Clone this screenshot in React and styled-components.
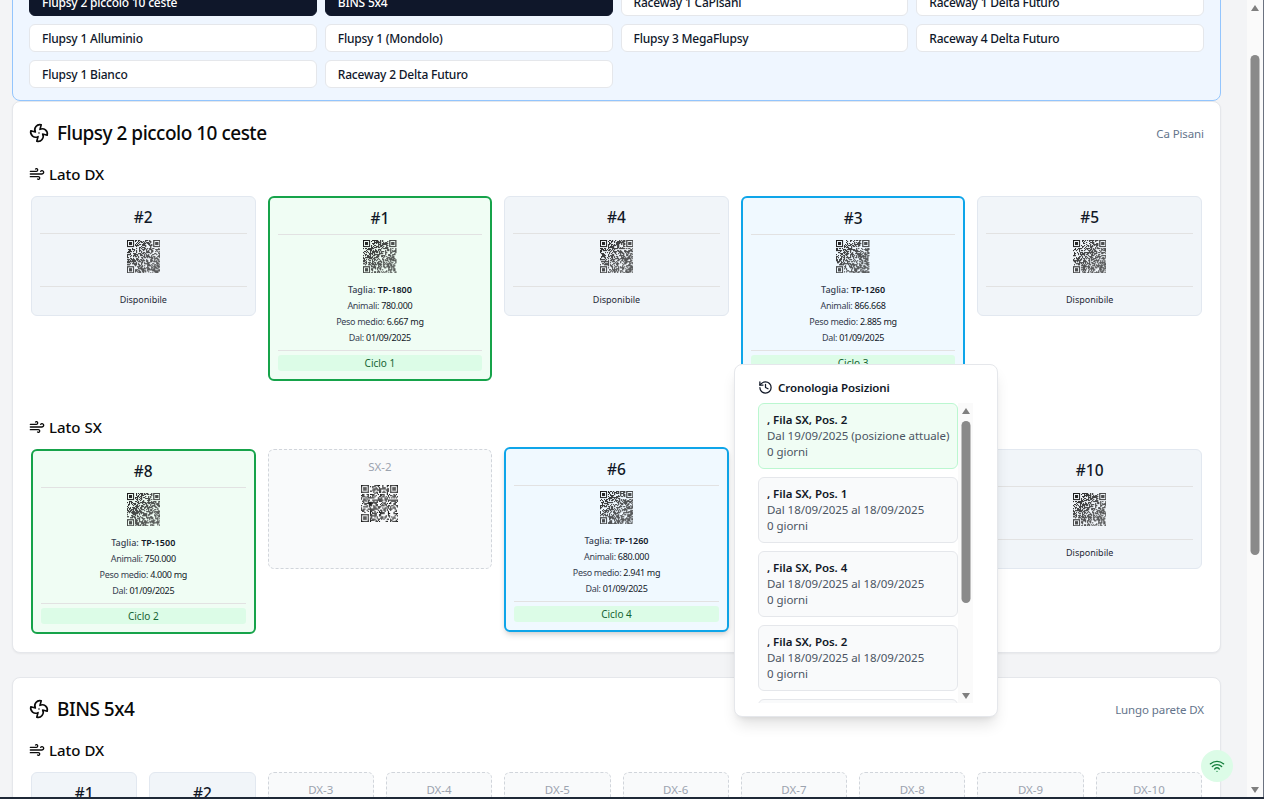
import React from "react";
import styled, { createGlobalStyle } from "styled-components";
import { Fan, Wind, History, Wifi } from "lucide-react";

const GlobalStyle = createGlobalStyle`
  html, body {
    margin: 0;
    padding: 0;
    height: 100%;
    overflow: hidden;
    background: #f3f4f6;
  }
  * { box-sizing: border-box; }
  body {
    font-family: "Noto Sans", "Open Sans", Arial, sans-serif;
    color: #0f172a;
  }
`;

const Viewport = styled.div`
  position: relative;
  width: 1264px;
  height: 799px;
  overflow: hidden;
  background: #f3f4f6;
`;

const Page = styled.main`
  width: 1247px;
  margin-top: -29px;
  padding: 0 26px 0 12px;
  display: flex;
  flex-direction: column;
`;

const SelectorPanel = styled.section`
  background: #eff6ff;
  border: 1px solid #93c5fd;
  border-radius: 8px;
  padding: 16px 16px 12px;
  display: grid;
  grid-template-columns: repeat(4, 1fr);
  gap: 8px;
`;

const SelectorButton = styled.button`
  height: 28px;
  padding: 0 12px;
  border-radius: 6px;
  text-align: left;
  font: 500 12px "Noto Sans", sans-serif;
  letter-spacing: -0.2px;
  border: 1px solid ${(p) => (p.$active ? "#0f172a" : "#e5e7eb")};
  background: ${(p) => (p.$active ? "#0f172a" : "#ffffff")};
  color: ${(p) => (p.$active ? "#ffffff" : "#0f172a")};
`;

const Card = styled.section`
  margin-top: ${(p) => p.$gap}px;
  background: #ffffff;
  border: 1px solid #e5e7eb;
  border-radius: 8px;
  box-shadow: 0 1px 2px rgba(0, 0, 0, 0.05);
  padding: 16px;
`;

const CardHeader = styled.header`
  display: flex;
  align-items: center;
  justify-content: space-between;
  height: 30px;
`;

const CardTitle = styled.h2`
  margin: 0;
  display: flex;
  align-items: center;
  gap: 8px;
  font-size: 19px;
  font-weight: 500;
  letter-spacing: -0.5px;
  line-height: 30px;
  color: #0a0a0a;
`;

const Location = styled.span`
  font-size: 11.5px;
  letter-spacing: -0.1px;
  color: #64748b;
`;

const SideTitle = styled.h3`
  margin: 14px 0 10px;
  display: flex;
  align-items: center;
  gap: 4px;
  height: 24px;
  font-size: 15px;
  font-weight: 500;
  color: #0a0a0a;
`;

const Grid = styled.div`
  display: grid;
  grid-template-columns: repeat(${(p) => p.$cols}, 1fr);
  gap: 12px;
  padding: 0 2px;
  align-items: start;
  margin-bottom: ${(p) => p.$bottom || 0}px;
`;

const palettes = {
  free: { border: "1px solid #e2e8f0", bg: "#f1f5f9" },
  busy: { border: "2px solid #16a34a", bg: "#f0fdf4" },
  blue: { border: "2px solid #0ea5e9", bg: "#f0f9ff" },
  empty: { border: "1px dashed #d1d5db", bg: "#f9fafb" },
};

const Basket = styled.div`
  border: ${(p) => palettes[p.$kind].border};
  background: ${(p) => palettes[p.$kind].bg};
  border-radius: 6px;
  padding: 8px;
  display: flex;
  flex-direction: column;
  align-items: center;
  transform: ${(p) => (p.$lifted ? "translateY(-2px)" : "none")};
  box-shadow: ${(p) => (p.$lifted ? "0 4px 6px -1px rgba(0,0,0,.15), 0 2px 4px -2px rgba(0,0,0,.1)" : "none")};
  height: ${(p) => p.$height}px;
  overflow: hidden;
`;

const BasketNumber = styled.div`
  width: 100%;
  text-align: center;
  font-size: 15.5px;
  font-weight: 500;
  line-height: 20px;
  padding: 2px 0 6px;
  border-bottom: 1px solid #e2e2e2;
  color: #111827;
`;

const EmptyLabel = styled.div`
  font-size: 11.5px;
  line-height: 16px;
  color: #9ca3af;
  margin: 1px 0 10px;
`;

const QrWrap = styled.div`
  padding: ${(p) => (p.$busy ? "5px 0 10px" : "6px 0 13px")};
  display: flex;
  justify-content: center;
  line-height: 0;
`;

const FreeLabel = styled.div`
  width: 100%;
  text-align: center;
  border-top: 1px solid #e2e2e2;
  padding-top: 6px;
  font-size: 9px;
  line-height: 14px;
  color: #1f2937;
`;

const Info = styled.div`
  text-align: center;
  font-size: 9px;
  letter-spacing: -0.3px;
  line-height: 16px;
  color: #374151;
  margin-top: -1px;
  b { font-weight: 400; color: #111827; }
`;

const SizeLine = styled.div`
  font-weight: 500;
  letter-spacing: 0;
  b { font-weight: 600; }
`;

const Cycle = styled.div`
  width: 100%;
  margin-top: 4px;
  border-top: 1px solid #e2e2e2;
  padding-top: 4px;
`;

const CycleTag = styled.div`
  height: 16px;
  border-radius: 3px;
  background: #dcfce7;
  color: #166534;
  font-size: 10px;
  line-height: 16px;
  text-align: center;
`;

const Popup = styled.aside`
  position: absolute;
  left: 734px;
  top: 364px;
  width: 264px;
  height: 353px;
  background: #ffffff;
  border: 1px solid #e5e7eb;
  border-radius: 8px;
  box-shadow: 0 10px 15px -3px rgba(0,0,0,.12), 0 4px 6px -4px rgba(0,0,0,.1);
  padding: 14px 24px 13px 23px;
  display: flex;
  flex-direction: column;
`;

const PopupTitle = styled.div`
  display: flex;
  align-items: center;
  gap: 5px;
  height: 16px;
  font-size: 11.5px;
  font-weight: 600;
  letter-spacing: -0.1px;
  color: #111827;
  margin-bottom: 8px;
`;

const PopupBody = styled.div`
  flex: 1;
  min-height: 0;
  display: flex;
`;

const EntryList = styled.div`
  width: 200px;
  overflow: hidden;
  display: flex;
  flex-direction: column;
  gap: 8px;
`;

const Entry = styled.div`
  flex: none;
  height: 66px;
  padding: 8px;
  border-radius: 6px;
  border: 1px solid ${(p) => (p.$current ? "#bbf7d0" : "#e5e7eb")};
  background: ${(p) => (p.$current ? "#f0fdf4" : "#f9fafb")};
  font-size: 11.5px;
  letter-spacing: -0.05px;
  line-height: 16px;
  color: #4b5563;
  white-space: nowrap;
  strong { display: block; font-weight: 600; color: #111827; }
`;

const ScrollBar = styled.div`
  flex: none;
  width: ${(p) => p.$width}px;
  background: #fafafa;
  display: flex;
  flex-direction: column;
  align-items: center;
  justify-content: space-between;
`;

const PageBar = styled(ScrollBar)`
  position: absolute;
  top: 0;
  right: 1px;
  bottom: 2px;
`;

const Thumb = styled.div`
  position: absolute;
  left: 50%;
  transform: translateX(-50%);
  top: ${(p) => p.$top}px;
  height: ${(p) => p.$height}px;
  width: 9px;
  border-radius: 5px;
  background: #8a8a8a;
`;

const Track = styled.div`
  position: relative;
  height: 100%;
  display: flex;
  flex-direction: column;
  justify-content: space-between;
  align-items: center;
  padding: 5px 0 4px;
  width: 100%;
`;

const Arrow = styled.div`
  width: 0;
  height: 0;
  border-left: 4.5px solid transparent;
  border-right: 4.5px solid transparent;
  ${(p) => (p.$down ? "border-top: 6px solid #7f7f7f;" : "border-bottom: 6px solid #7f7f7f;")}
`;

const WindowEdgeRight = styled.div`
  position: absolute;
  top: 0;
  right: 0;
  width: 1px;
  height: 100%;
  background: #6b7280;
`;

const WindowEdgeBottom = styled.div`
  position: absolute;
  left: 0;
  bottom: 0;
  width: 100%;
  height: 2px;
  background: #1f2937;
`;

const StatusBubble = styled.div`
  position: absolute;
  left: 1201px;
  top: 750px;
  width: 32px;
  height: 32px;
  border-radius: 50%;
  background: #dcfce7;
  color: #15803d;
  display: flex;
  align-items: center;
  justify-content: center;
`;

// fake qr code, only the look matters
const Qr = ({ seed, size = 33.4 }) => {
  const n = 33;
  const cells = [];
  const finder = (x, y) =>
    x < 7 && y < 7 ? [x, y] : x >= n - 7 && y < 7 ? [x - n + 7, y] : x < 7 && y >= n - 7 ? [x, y - n + 7] : null;
  let s = seed * 7919 + 13;
  for (let y = 0; y < n; y++) {
    for (let x = 0; x < n; x++) {
      s = (s * 1103515245 + 12345) & 0x7fffffff;
      const f = finder(x, y);
      let on;
      if (f) {
        const [a, b] = f;
        on = a === 0 || a === 6 || b === 0 || b === 6 || (a >= 2 && a <= 4 && b >= 2 && b <= 4);
      } else if ((x === 7 && (y < 8 || y >= n - 8)) || (y === 7 && (x < 8 || x >= n - 8)) || (x === n - 8 && y < 8) || (y === n - 8 && x < 8)) {
        on = false;
      } else {
        on = (s >> 16) % 100 < 50;
      }
      if (on) cells.push(<rect key={x + "-" + y} x={x} y={y} width="1" height="1" />);
    }
  }
  return (
    <svg width={size} height={size} viewBox={`0 0 ${n} ${n}`} fill="#1a1a1a">
      {cells}
    </svg>
  );
};

const FreeBasket = ({ num }) => (
  <Basket $kind="free" $height={120}>
    <BasketNumber>{num}</BasketNumber>
    <QrWrap>
      <Qr seed={num.charCodeAt(1)} />
    </QrWrap>
    <FreeLabel>Disponibile</FreeLabel>
  </Basket>
);

const BusyBasket = ({ num, kind = "busy", size, animals, weight, cycle, lifted }) => (
  <Basket $kind={kind} $height={185} $lifted={lifted}>
    <BasketNumber>{num}</BasketNumber>
    <QrWrap $busy>
      <Qr seed={num.charCodeAt(1)} />
    </QrWrap>
    <Info>
      <SizeLine>Taglia: <b>{size}</b></SizeLine>
      <div>Animali: <b>{animals}</b></div>
      <div>Peso medio: <b>{weight}</b></div>
      <div>Dal: <b>01/09/2025</b></div>
    </Info>
    <Cycle>
      <CycleTag>{cycle}</CycleTag>
    </Cycle>
  </Basket>
);

const EmptyBasket = ({ label, height }) => (
  <Basket $kind="empty" $height={height}>
    <EmptyLabel>{label}</EmptyLabel>
    <Qr seed={label.charCodeAt(3) + 40} size={37} />
  </Basket>
);

const flupsyButtons = [
  ["Flupsy 2 piccolo 10 ceste", true],
  ["BINS 5x4", true],
  ["Raceway 1 CaPisani"],
  ["Raceway 1 Delta Futuro"],
  ["Flupsy 1 Alluminio"],
  ["Flupsy 1 (Mondolo)"],
  ["Flupsy 3 MegaFlupsy"],
  ["Raceway 4 Delta Futuro"],
  ["Flupsy 1 Bianco"],
  ["Raceway 2 Delta Futuro"],
];

const history = [
  [", Fila SX, Pos. 2", "Dal 19/09/2025 (posizione attuale)", true],
  [", Fila SX, Pos. 1", "Dal 18/09/2025 al 18/09/2025"],
  [", Fila SX, Pos. 4", "Dal 18/09/2025 al 18/09/2025"],
  [", Fila SX, Pos. 2", "Dal 18/09/2025 al 18/09/2025"],
  [", Fila SX, Pos. 3", "Dal 18/09/2025 al 18/09/2025"],
];

const App = () => (
  <>
    <GlobalStyle />
    <Viewport>
      <Page>
        <SelectorPanel>
          {flupsyButtons.map(([name, active]) => (
            <SelectorButton key={name} $active={active}>{name}</SelectorButton>
          ))}
        </SelectorPanel>

        <Card $gap={0}>
          <CardHeader>
            <CardTitle><Fan size={20} strokeWidth={2} />Flupsy 2 piccolo 10 ceste</CardTitle>
            <Location>Ca Pisani</Location>
          </CardHeader>
          <SideTitle><Wind size={16} />Lato DX</SideTitle>
          <Grid $cols={5} $bottom={34}>
            <FreeBasket num="#2" />
            <BusyBasket num="#1" size="TP-1800" animals="780.000" weight="6.667 mg" cycle="Ciclo 1" />
            <FreeBasket num="#4" />
            <BusyBasket num="#3" kind="blue" size="TP-1260" animals="866.668" weight="2.885 mg" cycle="Ciclo 3" />
            <FreeBasket num="#5" />
          </Grid>
          <SideTitle><Wind size={16} />Lato SX</SideTitle>
          <Grid $cols={5} $bottom={2}>
            <BusyBasket num="#8" size="TP-1500" animals="750.000" weight="4.000 mg" cycle="Ciclo 2" />
            <EmptyBasket label="SX-2" height={120} />
            <BusyBasket num="#6" kind="blue" size="TP-1260" animals="680.000" weight="2.941 mg" cycle="Ciclo 4" lifted />
            <div />
            <FreeBasket num="#10" />
          </Grid>
        </Card>

        <Card $gap={24}>
          <CardHeader>
            <CardTitle><Fan size={20} strokeWidth={2} />BINS 5x4</CardTitle>
            <Location>Lungo parete DX</Location>
          </CardHeader>
          <SideTitle><Wind size={16} />Lato DX</SideTitle>
          <Grid $cols={10}>
            <FreeBasket num="#1" />
            <FreeBasket num="#2" />
            {[3, 4, 5, 6, 7, 8, 9, 10].map((n) => (
              <EmptyBasket key={n} label={"DX-" + n} height={120} />
            ))}
          </Grid>
        </Card>
      </Page>

      <Popup>
        <PopupTitle><History size={15} />Cronologia Posizioni</PopupTitle>
        <PopupBody>
          <EntryList>
            {history.map(([title, range, current], i) => (
              <Entry key={i} $current={current}>
                <strong>{title}</strong>
                {range}
                <br />0 giorni
              </Entry>
            ))}
          </EntryList>
          <ScrollBar $width={15}>
            <Track>
              <Arrow />
              <Thumb $top={18} $height={182} />
              <Arrow $down />
            </Track>
          </ScrollBar>
        </PopupBody>
      </Popup>

      <PageBar $width={16}>
        <Track>
          <Arrow />
          <Thumb $top={55} $height={500} />
          <Arrow $down />
        </Track>
      </PageBar>
      <StatusBubble><Wifi size={16} /></StatusBubble>
      <WindowEdgeRight />
      <WindowEdgeBottom />
    </Viewport>
  </>
);

export default App;
